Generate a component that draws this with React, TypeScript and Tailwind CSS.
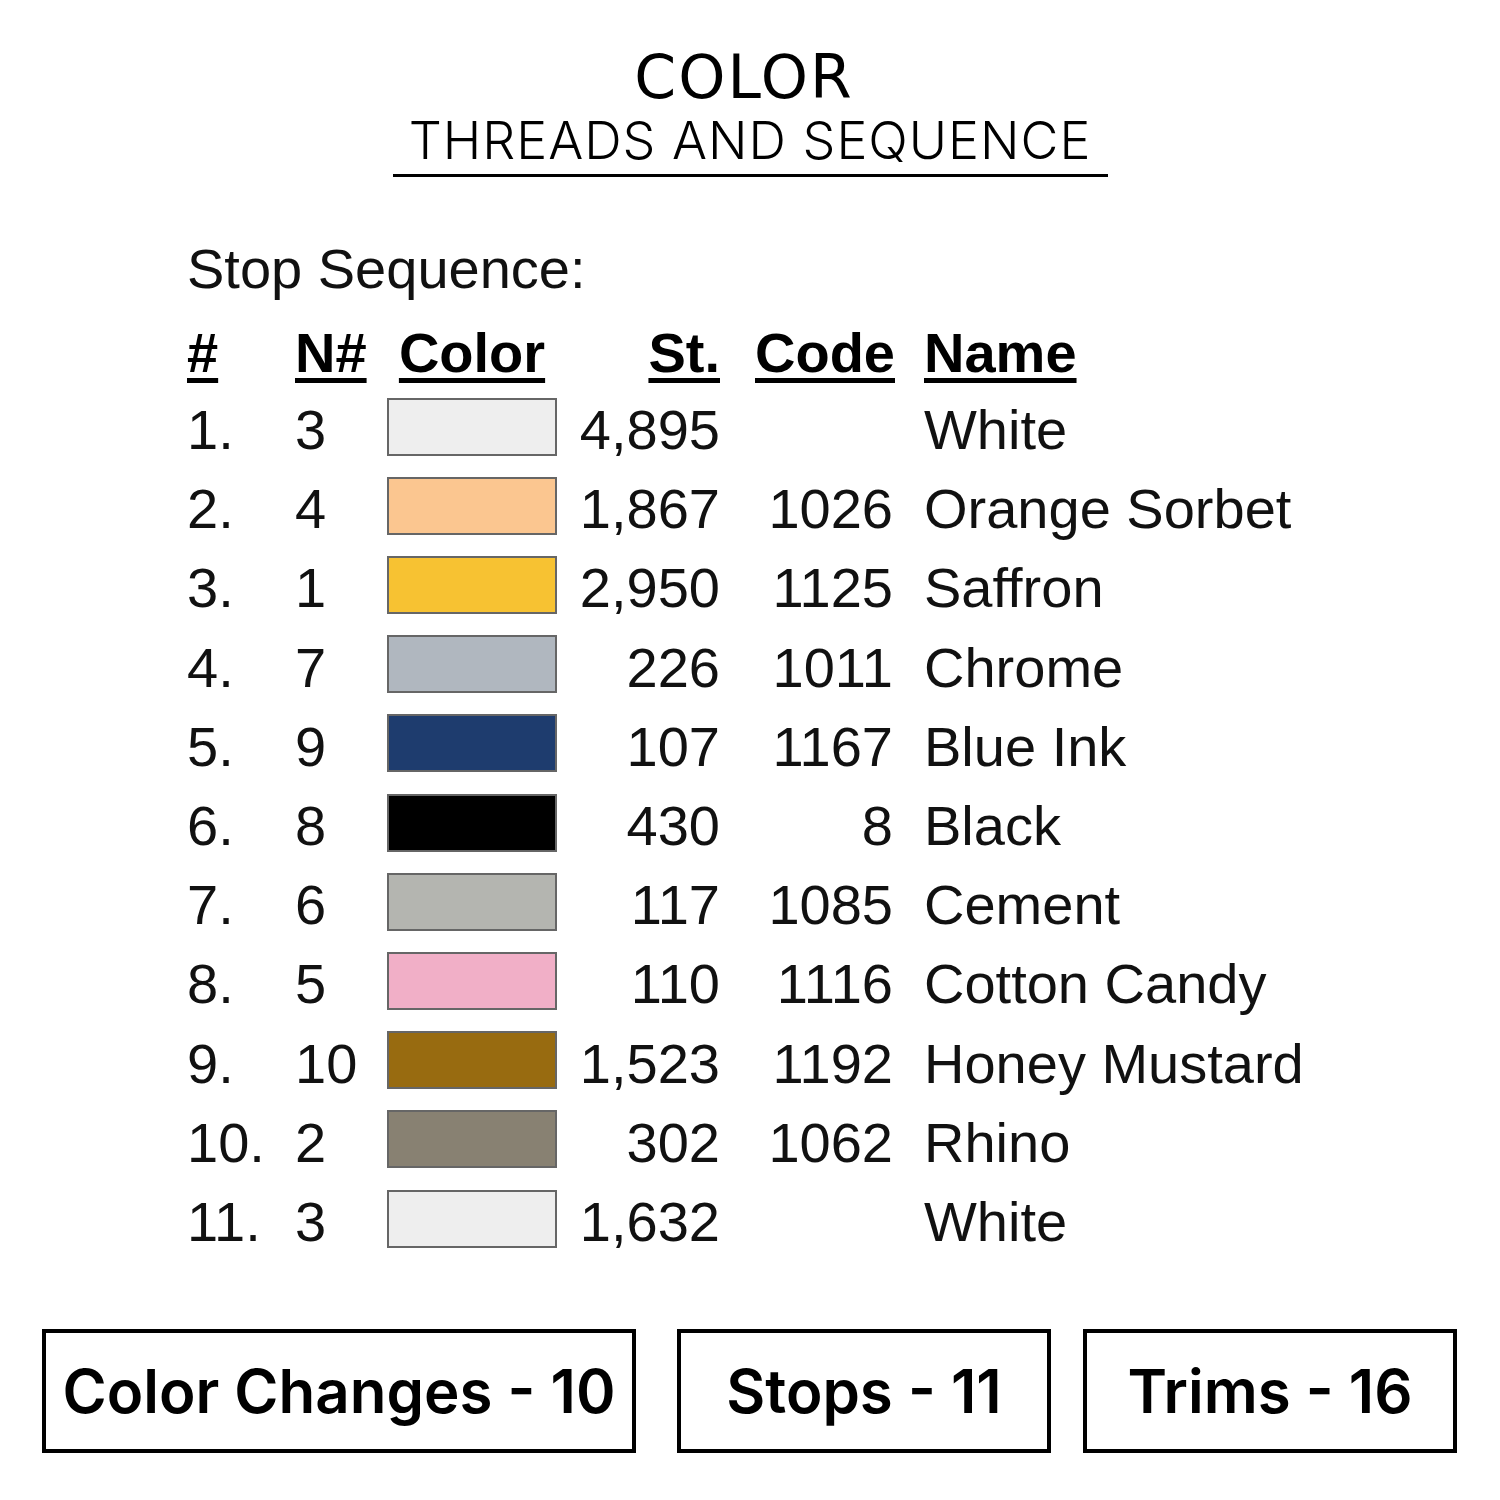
import React from "react";

type Stop = {
  n: string;
  needle: string;
  swatch: string;
  stitches: string;
  code: string;
  name: string;
};

const stops: Stop[] = [
  { n: "1.", needle: "3", swatch: "bg-[#eeeeee]", stitches: "4,895", code: "", name: "White" },
  { n: "2.", needle: "4", swatch: "bg-[#fbc690]", stitches: "1,867", code: "1026", name: "Orange Sorbet" },
  { n: "3.", needle: "1", swatch: "bg-[#f7c232]", stitches: "2,950", code: "1125", name: "Saffron" },
  { n: "4.", needle: "7", swatch: "bg-[#b0b7bf]", stitches: "226", code: "1011", name: "Chrome" },
  { n: "5.", needle: "9", swatch: "bg-[#1e3c6e]", stitches: "107", code: "1167", name: "Blue Ink" },
  { n: "6.", needle: "8", swatch: "bg-[#000000]", stitches: "430", code: "8", name: "Black" },
  { n: "7.", needle: "6", swatch: "bg-[#b4b5b0]", stitches: "117", code: "1085", name: "Cement" },
  { n: "8.", needle: "5", swatch: "bg-[#f1afc7]", stitches: "110", code: "1116", name: "Cotton Candy" },
  { n: "9.", needle: "10", swatch: "bg-[#986b10]", stitches: "1,523", code: "1192", name: "Honey Mustard" },
  { n: "10.", needle: "2", swatch: "bg-[#888172]", stitches: "302", code: "1062", name: "Rhino" },
  { n: "11.", needle: "3", swatch: "bg-[#eeeeee]", stitches: "1,632", code: "", name: "White" },
];

const cols = "grid grid-cols-[108px_92px_170px_163px_173px_1fr]";
const ul = "underline decoration-[5px] underline-offset-[6px]";

function StatBox({ label, width }: { label: string; width: string }) {
  return (
    <div
      className={`${width} h-[124px] border-[4px] border-black flex items-center justify-center font-['Inter',sans-serif] font-semibold text-[60px] text-black`}
    >
      {label}
    </div>
  );
}

export default function App() {
  return (
    <div className="w-[1500px] h-[1500px] bg-white flex flex-col">
      {/* title */}
      <div className="flex flex-col items-center pt-[42px]">
        <div className="font-['DejaVu_Sans',sans-serif] text-[60px] leading-[70px] tracking-[2px] text-black -ml-[12px]">
          COLOR
        </div>
        <div className="font-['Inter',sans-serif] font-light text-[52px] leading-[58px] text-black tracking-[1px]">
          THREADS AND SEQUENCE
        </div>
        <div className="w-[715px] h-[3px] bg-black mt-[4px]" />
      </div>

      {/* stop table */}
      <div className="pl-[187px] pt-[62px] font-['Liberation_Sans',Arial,sans-serif] text-[56px] text-[#111]">
        <div className="leading-[60px]">Stop Sequence:</div>
        <div className={`${cols} leading-[80px] font-bold mt-[14px] text-black`}>
          <span className={ul}>#</span>
          <span className={ul}>N#</span>
          <span className="text-center">
            <span className={ul}>Color</span>
          </span>
          <span className="text-right">
            <span className={ul}>St.</span>
          </span>
          <span className="text-right pl-[35px]">
            <span className={ul}>Code</span>
          </span>
          <span className="pl-[31px]">
            <span className={ul}>Name</span>
          </span>
        </div>
        <div className="-mt-[3px]">
          {stops.map((s, i) => (
            <div key={i} className={`${cols} leading-[79.2px] items-center`}>
              <span>{s.n}</span>
              <span>{s.needle}</span>
              <span className={`${s.swatch} h-[58px] border-2 border-[#666] -mt-[6px]`} />
              <span className="text-right">{s.stitches}</span>
              <span className="text-right">{s.code}</span>
              <span className="pl-[31px]">{s.name}</span>
            </div>
          ))}
        </div>
      </div>

      {/* summary boxes */}
      <div className="flex mt-auto mb-[47px] pl-[42px] gap-[41px]">
        <StatBox label="Color Changes - 10" width="w-[594px]" />
        <div className="flex gap-[32px]">
          <StatBox label="Stops - 11" width="w-[374px]" />
          <StatBox label="Trims - 16" width="w-[374px]" />
        </div>
      </div>
    </div>
  );
}
